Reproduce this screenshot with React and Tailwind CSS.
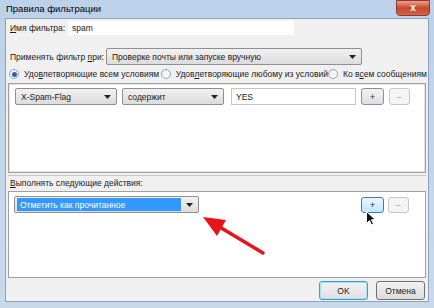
import React from 'react';

const Caret = () => (
  <svg width="7" height="4" viewBox="0 0 7 4" className="shrink-0">
    <path d="M0 0h7L3.5 4z" fill="#222" />
  </svg>
);

const Combo = ({ text, className = '' }) => (
  <div className={`flex items-center justify-between h-[17px] px-[5px] rounded-[2px] border border-[#8e8f8f] bg-gradient-to-b from-[#f2f2f2] to-[#dcdcdc] shrink-0 ${className}`}>
    <span className="truncate">{text}</span>
    <Caret />
  </div>
);

const Btn = ({ children, className = '' }) => (
  <div className={`flex items-center justify-center rounded-[3px] border shrink-0 ${className}`}>
    {children}
  </div>
);

const Radio = ({ checked, label, className = '' }) => (
  <div className={`flex items-center gap-[5px] shrink-0 ${className}`}>
    <div className="w-[10px] h-[10px] rounded-full border border-[#9aa3ad] bg-gradient-to-br from-[#e8ecf0] to-white flex items-center justify-center">
      {checked && <div className="w-[5px] h-[5px] rounded-full bg-[#2a5fa8]" />}
    </div>
    <span>{label}</span>
  </div>
);

export default function App() {
  return (
    <div className="w-[434px] h-[308px] bg-gradient-to-b from-[#bcd2ea] to-[#c8d9ec] flex flex-col text-[8.5px] leading-[12px] whitespace-nowrap text-[#1a1a1a] overflow-hidden relative" style={{ fontFamily: '"Liberation Sans", Arial, sans-serif' }}>
      {/* title bar */}
      <div className="h-[18px] shrink-0 flex items-center justify-between pl-[6px]">
        <span className="text-[9.5px] text-black">Правила фильтрации</span>
        <div className="w-[34px] h-[16px] self-start mr-[4px] rounded-b-[4px] border border-[#8a3a2c] bg-gradient-to-b from-[#e9a08e] via-[#c9452f] to-[#d6634a] flex items-center justify-center">
          <span className="text-white text-[10px] font-bold leading-none">x</span>
        </div>
      </div>

      <div className="flex-1 mx-[5px] border border-[#8da2bb] bg-[#f0f0f0] flex flex-col">
        {/* filter name */}
        <div className="flex items-center h-[14px] mt-[2px] pl-[4px]">
          <span className="w-[58px] shrink-0"><u>И</u>мя фильтра:</span>
          <div className="w-[226px] h-[14px] bg-white flex items-center pl-[4px]">spam</div>
        </div>

        {/* apply when */}
        <div className="flex items-center mt-[13px] pl-[4px]">
          <span className="w-[96px] shrink-0">Применять фильтр <u>п</u>ри:</span>
          <Combo text="Проверке почты или запуске вручную" className="w-[256px]" />
        </div>

        {/* radios */}
        <div className="flex items-center mt-[1px] pl-[3px] h-[16px]">
          <Radio checked label={<>Удо<u>в</u>летворяющие всем условиям</>} className="w-[152px]" />
          <Radio label={<>Удов<u>л</u>етворяющие любому из условий</>} className="w-[167px]" />
          <Radio label={<>Ко в<u>с</u>ем сообщениям</>} />
        </div>

        {/* conditions box */}
        <div className="mx-[2px] mt-[1px] h-[90px] shrink-0 bg-white border border-[#a0a0a0] shadow-[inset_0_0_0_1px_#e3e3e3] flex flex-col">
          <div className="flex items-center mt-[4px] pl-[6px]">
            <Combo text="X-Spam-Flag" className="w-[102px]" />
            <Combo text="содержит" className="w-[102px] ml-[5px]" />
            <div className="w-[125px] h-[17px] ml-[7px] border border-[#c5c5c5] bg-white flex items-center pl-[4px] shrink-0">YES</div>
            <Btn className="w-[23px] h-[17px] ml-[5px] border-[#8f8f8f] bg-gradient-to-b from-[#f3f3f3] to-[#dedede]">+</Btn>
            <Btn className="w-[21px] h-[17px] ml-[5px] border-[#c8c8c8] bg-[#f4f4f4] text-[#9a9a9a]">−</Btn>
          </div>
        </div>

        {/* splitter */}
        <div className="h-[3px] shrink-0 mx-[2px] border-b border-[#c8c8c8]" />

        <div className="h-[14px] shrink-0 flex items-center pl-[4px]">
          <span><u>В</u>ыполнять следующие действия:</span>
        </div>

        {/* actions box */}
        <div className="mx-[2px] mt-[1px] h-[87px] shrink-0 bg-white border border-[#a0a0a0] flex flex-col">
          <div className="flex items-center justify-between mt-[4px] pl-[5px] pr-[16px]">
            <div className="w-[185px] h-[17px] flex items-center justify-between border border-[#8e8f8f] rounded-[2px] bg-gradient-to-b from-[#f2f2f2] to-[#dcdcdc] pr-[5px]">
              <div className="h-[13px] ml-[2px] w-[164px] bg-[#3399ff] text-white flex items-center pl-[3px]">Отметить как прочитанное</div>
              <Caret />
            </div>
            <div className="flex items-center">
              <Btn className="w-[23px] h-[16px] border-[#3c7fb1] bg-gradient-to-b from-[#eaf6fd] to-[#bee6fd]">+</Btn>
              <Btn className="w-[21px] h-[16px] ml-[4px] border-[#c8c8c8] bg-[#f4f4f4] text-[#9a9a9a]">−</Btn>
            </div>
          </div>
        </div>

        {/* footer buttons */}
        <div className="flex justify-end items-center gap-[8px] pr-[3px] mt-[3px]">
          <Btn className="w-[49px] h-[19px] border-[#3c9fd0] bg-gradient-to-b from-[#f2f2f2] to-[#e0e0e0] shadow-[inset_0_0_0_1px_#a8e0f8]">OK</Btn>
          <Btn className="w-[49px] h-[19px] border-[#707070] bg-gradient-to-b from-[#f2f2f2] to-[#dcdcdc]">Отмена</Btn>
        </div>
      </div>
      <div className="h-[6px] shrink-0" />

      {/* annotation arrow */}
      <svg className="absolute left-0 top-0 pointer-events-none" width="434" height="308">
        <line x1="263" y1="253" x2="218" y2="226" stroke="#e8141a" strokeWidth="3.5" strokeLinecap="round" />
        <polygon points="203,217 226,220 217,236" fill="#e8141a" />
      </svg>
      {/* cursor */}
      <svg className="absolute left-[366px] top-[211px] pointer-events-none" width="10" height="15" viewBox="0 0 10 15">
        <path d="M0.5 0.5v12l3-3 2 4.5 2-1-2-4.3h4z" fill="#111" stroke="#fff" strokeWidth="1" />
      </svg>
    </div>
  );
}
